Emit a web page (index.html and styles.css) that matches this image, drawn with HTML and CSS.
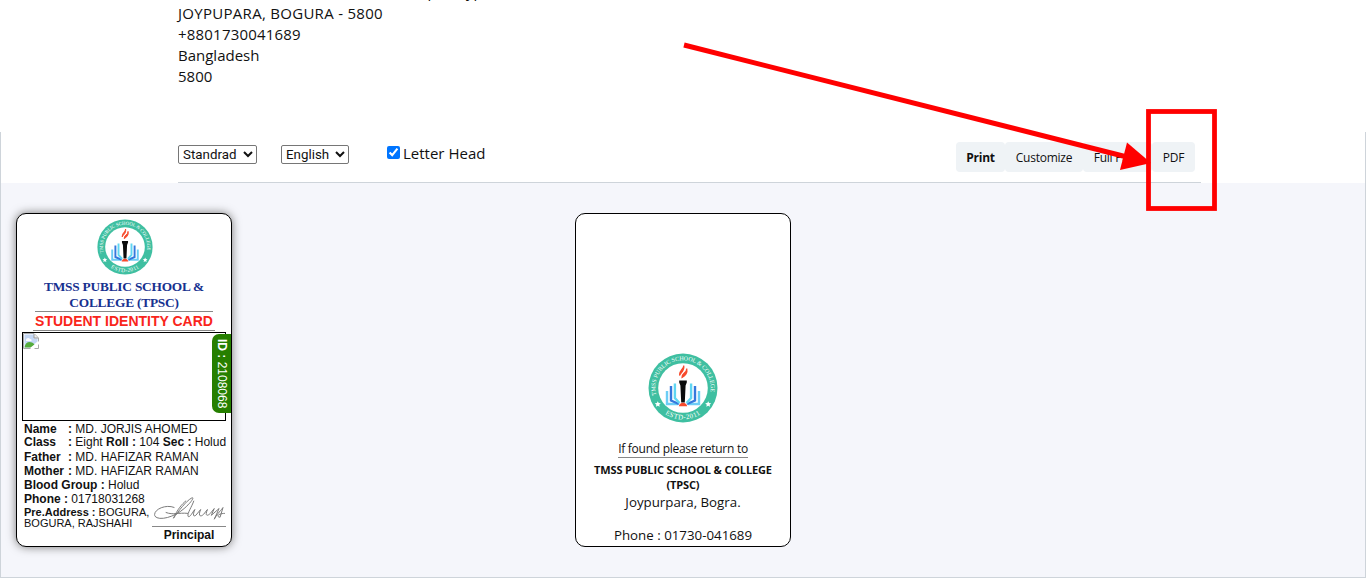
FILE: index.html
```html
<!DOCTYPE html>
<html lang="en">
<head>
<meta charset="utf-8">
<title>Student Identity Card</title>
<link rel="stylesheet" href="styles.css">
</head>
<body>
<svg class="defs" width="0" height="0" aria-hidden="true">
  <defs>
    <symbol id="crest" viewBox="0 0 70 70">
      <circle cx="35" cy="35" r="34.5" fill="#3fbfa1"/>
      <circle cx="35" cy="35" r="24.8" fill="#fff"/>
      <path id="ring-top" d="M8.5 43 A27.7 27.7 0 1 1 61.5 43" fill="none"/>
      <path id="ring-bottom" d="M8 51.200 A31.500 31.500 0 0 0 62 51.200" fill="none"/>
      <text class="crest-text"><textPath href="#ring-top" textLength="98" startOffset="1">TMSS PUBLIC SCHOOL &amp; COLLEGE</textPath></text>
      <text class="crest-text year" text-anchor="middle"><textPath href="#ring-bottom" startOffset="50%">ESTD-2011</textPath></text>
      <g fill="#fff">
        <path id="star" d="M9.8 48.2l.9 1.9 2.1.2-1.6 1.4.5 2.1-1.9-1.1-1.9 1.1.5-2.1-1.6-1.4 2.1-.2z"/>
        <use href="#star" x="50.4"/>
      </g>
      <g fill="none">
        <path d="M19 38v13h11M51 38v13H40" stroke="#6ccdf5" stroke-width="2.400"/>
        <path d="M23 33v14.500l8 3.500M47 33v14.500l-8 3.500" stroke="#3478dc" stroke-width="2.400"/>
        <path d="M26.900 30.500v14.500l4.500 5M43.100 30.500v14.500l-4.500 5" stroke="#5fd6f2" stroke-width="2.400"/>
      </g>
      <path d="M31.200 27.500h7.600v2l-1.200 3-.8 17h-3.600l-.8-17-1.200-3z" fill="#0b0b0b"/>
      <path d="M30.800 53.200c.4-2 2-3.500 4.200-3.500s3.800 1.500 4.200 3.500z" fill="#f74a2c"/>
      <path d="M35.800 12.500c0 4-5 5-4.300 10 1-3 5-4 4.300-10zM38.800 15.500c0 5-5 4-4.800 9 3-2 5.800-4 4.800-9z" fill="#f74a2c" stroke="#f74a2c" stroke-width="1.200"/>
    </symbol>
  </defs>
</svg>
<div class="page">
  <header class="address">
    <div class="clip-line"><span>Shop</span><span>Type</span></div>
    <div class="area">JOYPUPARA, BOGURA - 5800</div>
    <div class="mobile">+8801730041689</div>
    <div>Bangladesh</div>
    <div>5800</div>
  </header>
  <main class="panel">
    <div class="toolbar-wrap">
      <div class="toolbar">
        <select class="sel sel-layout"><option>Standrad</option></select>
        <select class="sel sel-lang"><option>English</option></select>
        <label class="check"><input type="checkbox" checked><span>Letter Head</span></label>
        <nav class="buttons">
          <button class="btn print">Print</button>
          <button class="btn customize">Customize</button>
          <button class="btn full">Full Page</button>
          <button class="btn pdf">PDF</button>
        </nav>
      </div>
    </div>
    <section class="sheet">
      <article class="card front">
        <svg class="logo small"><use href="#crest"/></svg>
        <h1>TMSS PUBLIC SCHOOL &amp;<br>COLLEGE (TPSC)</h1>
        <h2>STUDENT IDENTITY CARD</h2>
        <div class="photo">
          <svg width="16" height="16" viewBox="0 0 16 16">
            <path d="M.5.500H11L15.500 5v10.500H.5z" fill="#fff" stroke="#a8a8a8"/>
            <path d="M1.500 1.500h9.500v4H14.500v3L7 14.500H1.500z" fill="#c4d7f5"/>
            <path d="M3 7c0-2 3-3 4-1 2 0 2 2 1 2H3z" fill="#fff"/>
            <path d="M1.500 14.500c1-6 6-7 10-3l-4 3z" fill="#55ac3d"/>
            <path d="M11 1v4h4" fill="#eee" stroke="#999"/>
            <path d="M7 16l9-8v3l-5 5z" fill="#fff"/>
          </svg>
          <div class="id"><b>ID :</b> 2108068</div>
        </div>
        <div class="details">
          <div class="row r1"><b class="key">Name</b><b>:</b> MD. JORJIS AHOMED</div>
          <div class="row r2"><b class="key">Class</b><b>:</b> Eight <b>Roll :</b> 104 <b>Sec :</b> Holud</div>
          <div class="row"><b class="key">Father</b><b>:</b> MD. HAFIZAR RAMAN</div>
          <div class="row"><b class="key">Mother</b><b>:</b> MD. HAFIZAR RAMAN</div>
          <div class="row"><b>Blood Group :</b> Holud</div>
          <div class="row"><b>Phone :</b> 01718031268</div>
          <div class="row addr"><b>Pre.Address :</b> BOGURA,<br>BOGURA, RAJSHAHI</div>
          <div class="sign">
            <svg width="74" height="34" viewBox="0 0 74 34" fill="none" stroke="#777">
              <path d="M22 15C12 11-1 18 2 24c4 5 20 1 30-8 7-6 11-12 8-11-6 3-14 14-19 21 4-9 9-15 13-18M13 20c8 3 13 0 23 1"/>
              <path d="M42 8c-2 6-7 13-6 16 2 2 5-5 7-7-2 5-2 8 1 6l5-6c-3 7 0 8 3 5l4-5c-3 7 0 7 3 4l4-5-3 7 8-7-5 11c4-7 7-9 9-12l-3 10c-5-1-1-4 5-4"/>
            </svg>
            <span>Principal</span>
          </div>
        </div>
      </article>
      <article class="card back">
        <svg class="logo large"><use href="#crest"/></svg>
        <p class="found">If found please return to</p>
        <p class="school">TMSS PUBLIC SCHOOL &amp; COLLEGE<br>(TPSC)</p>
        <p class="place">Joypurpara, Bogra.</p>
        <p class="tel">Phone : 01730-041689</p>
      </article>
    </section>
  </main>
</div>
<svg class="annotation" width="1366" height="578" viewBox="0 0 1366 578">
  <path d="M684 45L1127 157" stroke="#f00" stroke-width="5"/>
  <path d="M1127 142.500L1151 163L1120 170z" fill="#f00"/>
  <rect x="1148.500" y="111.500" width="66" height="97" fill="none" stroke="#f00" stroke-width="4.800"/>
</svg>
</body>
</html>
```
FILE: styles.css
```css
* { box-sizing: border-box; }
body { margin: 0; background: #fff; color: #111; font: 15px/21px "Open Sans", "Noto Sans", sans-serif; overflow: hidden; }
.defs { display: block; }
.page { height: 578px; overflow: hidden; display: flex; flex-direction: column; }
.address { height: 132px; padding-left: 178px; flex: none; overflow: hidden; }
.clip-line { margin: -19px 0 1px 223px; height: 21px; display: flex; gap: 21px; }
.area { letter-spacing: .29px; }
.mobile { letter-spacing: .2px; }
.panel { flex: 1; border: 1px solid #ced4da; border-top: 0; background: #f5f6fb; }
.toolbar-wrap { background: #fff; height: 51px; padding: 0 164px 0 177px; }
.toolbar { height: 51px; border-bottom: 1px solid #ced4da; display: flex; align-items: flex-start; }
.sel { height: 19px; margin-top: 13px; font: 13.333px Roboto, sans-serif; background: #fff; color: #111; border: 1px solid #767676; border-radius: 2px; padding: 0; }
.sel-layout { width: 79px; }
.sel-lang { width: 68px; margin-left: 24px; }
.check { display: flex; margin: 11px 0 0 38px; }
.check input { width: 13px; height: 13px; margin: 3px 3px 0 0; }
.buttons { display: flex; margin: 10px 6px 0 auto; }
.btn { height: 30px; padding: 0; border: 0; border-radius: 4px; background: #eff3f6; color: #111; font: 12px "Open Sans", sans-serif; letter-spacing: -.25px; }
.print { width: 49px; font-weight: 700; }
.customize { width: 78px; }
.full { width: 69px; }
.pdf { width: 43px; }
.sheet { display: flex; gap: 343px; padding: 30px 0 0 15px; }
.card { width: 216px; height: 334px; border: 1px solid #000; border-radius: 10px; background: #fff; display: flex; flex-direction: column; align-items: center; }
.front { box-shadow: 0 0 10px #777; font-family: "Liberation Sans", Arial, sans-serif; }
.logo { display: block; flex: none; }
.small { width: 56px; height: 56px; margin: 5px 0 0 1px; }
.large { width: 70px; height: 70px; margin-top: 139px; }
.crest-text { font: 6px "Liberation Serif", serif; fill: #fff; }
.year { font-size: 7px; letter-spacing: .5px; }
h1 { margin: 4px 0 0; font: bold 13.333px/16px "Liberation Serif", serif; letter-spacing: -.2px; color: #17318f; text-align: center; border-bottom: 1px solid #888; width: 178px; height: 33px; }
h2 { margin: 1px 0 0; font: bold 14px/17px "Liberation Sans", sans-serif; color: #f9251b; width: 182px; text-align: center; border-bottom: 1px solid #888; height: 18px; white-space: nowrap; }
.photo { width: 204px; height: 89px; border: 1px solid #000; margin-top: 1px; flex: none; display: flex; justify-content: space-between; }
.id { width: 19px; height: 79px; margin: 1px -6px 0 0; background: #267f00; color: #fff; border-radius: 7px 0 0 7px; writing-mode: vertical-rl; font-size: 12px; line-height: 19px; text-align: center; white-space: nowrap; }
.details { width: 204px; padding-left: 2px; font-size: 12px; line-height: 14px; position: relative; margin-top: 1px; }
.row { white-space: nowrap; height: 14px; }
.r1 { height: 13px; }
.r2 { height: 15px; }
.key { display: inline-block; width: 44px; }
.addr { font-size: 11px; line-height: 11px; padding-top: 1px; }
.sign { position: absolute; right: 0; bottom: -22px; width: 74px; text-align: center; font-weight: bold; }
.sign svg { display: block; border-bottom: 1px solid #888; margin-bottom: 1px; }
.back p { margin: 0; text-align: center; white-space: nowrap; }
.back .found { margin-top: 18px; font-size: 12px; line-height: 16px; letter-spacing: -.27px; border-bottom: 1px solid #888; }
.back .school { margin-top: 4px; font-size: 11px; line-height: 15px; font-weight: 700; letter-spacing: -.14px; }
.back .place { font-size: 13.300px; line-height: 20px; }
.back .tel { font-size: 13.300px; line-height: 20px; margin-top: 13px; }
.annotation { position: absolute; left: 0; top: 0; pointer-events: none; }
```
